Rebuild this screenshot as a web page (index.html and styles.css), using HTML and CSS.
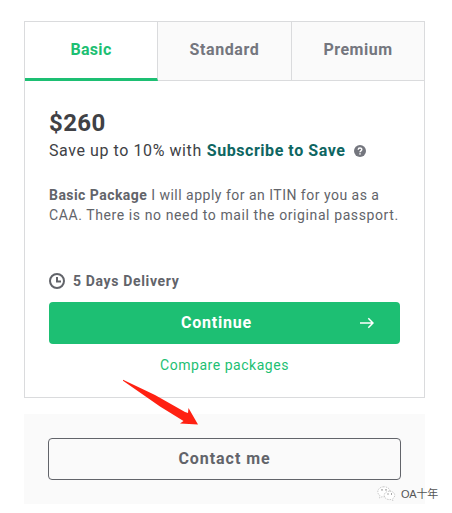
FILE: index.html
```html
<!DOCTYPE html>
<html lang="en">
<head>
    <meta charset="UTF-8">
    <meta name="viewport" content="width=device-width, initial-scale=1.0">
    <title>Packages</title>
    <link rel="stylesheet" href="styles.css">
</head>
<body>

    <div class="card">
        <div class="tabs">
            <div class="tab active"><span>Basic</span></div>
            <div class="tab standard"><span>Standard</span></div>
            <div class="tab premium"><span>Premium</span></div>
        </div>
        <div class="content">
            <div class="price">$260</div>
            <div class="save">
                <span class="save-text">Save up to 10% with</span>
                <b>Subscribe to Save</b>
                <svg class="help" width="12" height="12" viewBox="0 0 12 12">
                    <circle cx="6" cy="6" r="6" fill="#74767e"/>
                    <path d="M4.2 4.7C4.2 2.5 7.8 2.5 7.8 4.6C7.8 5.9 6 5.8 6 7.2" fill="none" stroke="#fff" stroke-width="1.4"/>
                    <rect x="5.3" y="8.2" width="1.4" height="1.4" fill="#fff"/>
                </svg>
            </div>
            <p class="description">
                <span class="intro"><b>Basic Package</b> I will apply for an ITIN for you as a</span>
                <span>CAA. There is no need to mail the original passport.</span>
            </p>
            <div class="delivery">
                <svg width="16" height="16" viewBox="0 0 16 16" fill="none" stroke="#62646a" stroke-width="2">
                    <circle cx="8" cy="8" r="7"/>
                    <path d="M8 4V8.5H12"/>
                </svg>
                <b>5 Days Delivery</b>
            </div>
            <button class="continue">
                <span>Continue</span>
                <svg class="next" width="14" height="12" viewBox="0 0 14 12" fill="none" stroke="#fff" stroke-width="1.5">
                    <path d="M0 6H13M8.3 1.2L13 6L8.3 10.8"/>
                </svg>
            </button>
            <a class="compare">Compare packages</a>
        </div>
    </div>

    <div class="contact">
        <button class="contact-btn"><span>Contact me</span></button>
    </div>

    <svg class="arrow" width="80" height="50" viewBox="0 0 80 50">
        <path d="M3 .7L35 16L65 33L68 34L68.5 29L78 45.5L60 44.5L63.5 42L40 27.5L3 1.8Z" fill="#ff2112"/>
    </svg>

    <div class="watermark">
        <svg width="19" height="15" viewBox="0 0 19 15" fill="#fff" stroke="#bbb" stroke-width=".8" stroke-dasharray="1.5 1">
            <path d="M7 .8C3.4.8.8 3 .8 5.8C.8 7.5 1.7 8.8 3 9.7L2.5 12L5 10.7C10 11.5 13.2 9 13.2 5.8C13.2 3 10.6.8 7 .8Z"/>
            <path d="M12.5 5.2C9.5 5.2 7.2 7 7.2 9.4C7.2 12 10.2 14.2 14 13.5L16 14.4L15.6 12.8C20 9.8 17.2 5.2 12.5 5.2Z"/>
            <path d="M4.5 3.8h1M8.5 3.8h1M10.5 8h1M14 8h1" stroke="#555" stroke-width="1.2" stroke-dasharray="none"/>
        </svg>
        <span>OA十年</span>
    </div>

</body>
</html>
```
FILE: styles.css
```css
body {
    margin: 0;
    padding: 21px 27px 9px 24px;
    background: white;
    font-family: Roboto, "Liberation Sans", sans-serif;
    color: #62646a;
    height: 483px;
    overflow: hidden;
}

.card {
    box-sizing: border-box;
    height: 377px;
    border: 1px solid #dadbdd;
}

.tabs {
    display: grid;
    grid-template-columns: 133px 134px 1fr;
    height: 59px;
}

.tab {
    box-sizing: border-box;
    display: flex;
    justify-content: center;
    padding-top: 16px;
    border-right: 1px solid #dadbdd;
    border-bottom: 1px solid #dadbdd;
    background: #fafafa;
    color: #74767e;
    font-size: 16px;
    line-height: 24px;
    font-weight: bold;
    letter-spacing: 0.3px;
}

.tab.active {
    background: white;
    color: #1dbf73;
    border-bottom: 3px solid #1dbf73;
}

.standard {
    letter-spacing: 0.6px;
}

.premium {
    border-right: none;
    letter-spacing: 0.5px;
}

.content {
    padding: 26px 24px 0;
    display: flex;
    flex-direction: column;
}

.price {
    color: #404145;
    font-size: 24px;
    line-height: 32px;
    font-weight: bold;
    letter-spacing: 0.4px;
}

.save {
    display: flex;
    align-items: center;
    gap: 5px;
    color: #404145;
    font-size: 16px;
    line-height: 24px;
    white-space: nowrap;
}

.save-text {
    letter-spacing: 0.58px;
}

.save b {
    color: #0e6662;
    letter-spacing: 0.55px;
}

.help {
    margin-left: 4px;
}

.description {
    margin: 22px 0 0;
    font-size: 14px;
    line-height: 20px;
    letter-spacing: 0.6px;
    white-space: nowrap;
}

.description span {
    display: block;
}

.description .intro {
    letter-spacing: 0.49px;
}

.description b {
    letter-spacing: 0.45px;
}

.delivery {
    display: flex;
    align-items: center;
    gap: 8px;
    margin-top: 46px;
    font-size: 14px;
    line-height: 20px;
    letter-spacing: 0.65px;
}

.continue {
    position: relative;
    height: 42px;
    width: 351px;
    margin-top: 11px;
    padding: 0 16px 2px 0;
    border: none;
    border-radius: 4px;
    background: #1dbf73;
    color: white;
    font: bold 16px Roboto, sans-serif;
    letter-spacing: 0.8px;
}

.next {
    position: absolute;
    right: 26px;
    top: 15px;
}

.compare {
    margin-top: 11px;
    text-align: center;
    color: #1dbf73;
    font-size: 14px;
    line-height: 20px;
    letter-spacing: 0.53px;
}

.contact {
    box-sizing: border-box;
    height: 90px;
    margin-top: 16px;
    padding: 24px;
    background: #fafafa;
}

.contact-btn {
    width: 353px;
    height: 42px;
    padding: 0 0 2px;
    border: 1px solid #62646a;
    border-radius: 4px;
    background: transparent;
    color: #62646a;
    font: bold 16px Roboto, sans-serif;
    letter-spacing: 0.95px;
}

.arrow {
    position: absolute;
    left: 120px;
    top: 379px;
}

.watermark {
    position: absolute;
    left: 377px;
    top: 486px;
    display: flex;
    gap: 5px;
    color: #555;
    font: 11px/16px "Liberation Sans", "Noto Sans CJK SC", sans-serif;
    letter-spacing: -0.2px;
    white-space: nowrap;
}
```
